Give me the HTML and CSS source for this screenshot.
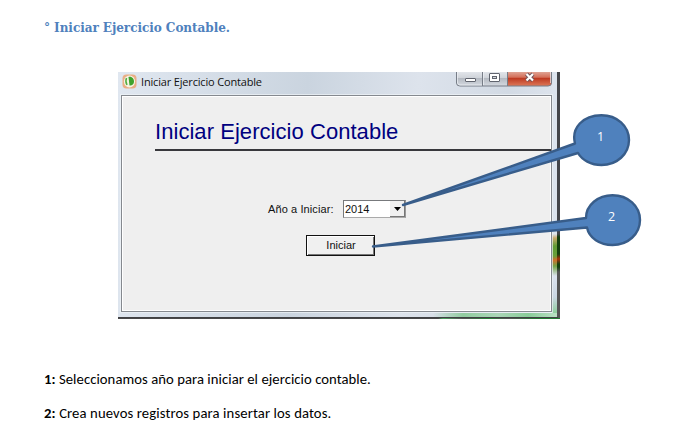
FILE: index.html
```
<!DOCTYPE html>
<html lang="es">
<head>
<meta charset="utf-8">
<title>Iniciar Ejercicio Contable</title>
<link rel="stylesheet" href="styles.css">
</head>
<body>
<main class="page">
  <h2 class="section"><span>° Iniciar Ejercicio Contable.</span></h2>
  <section class="window">
    <header class="titlebar">
      <svg class="appicon" width="15" height="15" viewBox="0 0 15 15">
        <rect x=".5" y=".5" width="14" height="14" rx="4" fill="#e9ae86"/>
        <ellipse cx="7.500" cy="7.500" rx="5.600" ry="6" fill="#f7f3e4"/>
        <path d="M6.500 3C10 2 12 5 12 7.500C12 10.500 9.500 12 7.500 11.500Z" fill="#3fa32d"/>
        <path d="M4.500 4Q3 7.500 5 11" stroke="#55ad43" stroke-width="1.500" fill="none"/>
      </svg>
      <span class="caption">Iniciar Ejercicio Contable</span>
      <svg class="controls" width="96" height="15" viewBox="0 0 96 15">
        <defs>
          <linearGradient id="glass" x2="0" y2="1"><stop offset="0" stop-color="#e2e5ea"/><stop offset=".4" stop-color="#d0d4da"/><stop offset=".45" stop-color="#b4b9c1"/><stop offset="1" stop-color="#d5dae1"/></linearGradient>
          <linearGradient id="red" x2="0" y2="1"><stop offset="0" stop-color="#dfa394"/><stop offset=".38" stop-color="#d46e58"/><stop offset=".44" stop-color="#bd3820"/><stop offset="1" stop-color="#dd7959"/></linearGradient>
        </defs>
        <path d="M.5 0V11Q.5 14 4 14H92Q95.500 14 95.500 11V0Z" fill="url(#glass)"/>
        <path d="M51 0H95.500V11Q95.500 14 92 14H51Z" fill="url(#red)"/>
        <path d="M.5 0V11Q.5 14 4 14H92Q95.500 14 95.500 11V0M26.500 0V14M51.500 0V14" fill="none" stroke="#777d87"/>
        <path d="M1.500 0V11Q2 13 4 13H26M27.500 0V13M94.500 0V11" fill="none" stroke="#eef1f5" opacity=".7"/>
        <rect x="9.500" y="6.500" width="10" height="3" rx=".5" fill="#fff" stroke="#60646e"/>
        <rect x="33.500" y="1.500" width="10" height="8" rx=".5" fill="#fff" stroke="#60646e"/>
        <rect x="36.500" y="4.500" width="4" height="2" fill="#d5d8dd" stroke="#60646e"/>
        <path d="M70.500 2L77 8.500M77 2L70.500 8.500" stroke="#70545a" stroke-width="4"/>
        <path d="M70.500 2L77 8.500M77 2L70.500 8.500" stroke="#fff" stroke-width="2.200"/>
      </svg>
    </header>
    <div class="client">
      <h1 class="heading"><span>Iniciar Ejercicio Contable</span></h1>
      <div class="field">
        <span class="label">Año a Iniciar:</span>
        <span class="combo"><span class="value">2014</span><span class="drop"><svg width="9" height="5" viewBox="0 0 9 5"><path d="M1 0H8L4.500 4Z"/></svg></span></span>
      </div>
      <button class="action"><span>Iniciar</span></button>
    </div>
  </section>
  <p class="note first"><b>1:</b> Seleccionamos año para iniciar el ejercicio contable.</p>
  <p class="note second"><b>2:</b> Crea nuevos registros para insertar los datos.</p>
  <svg class="callouts" width="693" height="444" viewBox="0 0 693 444">
    <g fill="#4f81bd" stroke="#385d8a" stroke-width="2.400" stroke-linejoin="round">
      <path d="M575 143.500C571 128 583 115.200 601.500 115.200C617 115.200 629 126 629 140C629 154 617 165 601.500 165C591 165 582 160 578 153L403 205Z"/>
      <path d="M586 218C586 205 598 195.200 612.500 195.200C628 195.200 640 206 640 220C640 234 628 245 612.500 245C600 245 589 238 587 227.500L373 246.500Z"/>
    </g>
    <text x="600.500" y="141">1</text>
    <text x="611.500" y="221">2</text>
  </svg>
</main>
</body>
</html>
```
FILE: styles.css
```
* { box-sizing: border-box; }
body { margin: 0; background: #fff; }
.page { position: relative; width: 693px; height: 444px; overflow: hidden; }
.section {
  height: 72px; margin: 0; padding: 18px 0 0 44px;
  font: bold 13.4px/19px "DejaVu Serif Condensed", "DejaVu Serif", serif;
  font-stretch: condensed; letter-spacing: -.06px; color: #4f81bd;
}
.window {
  width: 442px; height: 247px; margin-left: 118px; padding: 0 8px 7px 3px;
  background:
    linear-gradient(90deg, transparent 320px, #47a05b 325px, #555 345px, #238335 370px, #555 390px, #207a30 420px) 0 246px / 442px 1px no-repeat,
    linear-gradient(#3c3d40, #4b4b4d) 0 245px / 440px 2px no-repeat,
    linear-gradient(#44464b 0 162px, #143f0d 165px 182px, #a8330b 187px, #143f0d 192px 195px, #555 200px) 439px 0 / 3px 100% no-repeat,
    linear-gradient(90deg, transparent 315px, #91cda0 345px, #aad6b7 380px, #89cd99 410px, #b9dfc3 438px) 0 241px / 439px 4px no-repeat,
    linear-gradient(#dce4ee 0 162px, #c8a96d 166px, #619c35 174px, #68a03a 184px, #d0702b 188px, #73a246 194px, #dce3ef 204px, #cad7e3 225px, #92cfa1 240px) 434px 0 / 5px 100% no-repeat,
    linear-gradient(95deg, #e0e7f0, #cad4df 190px, #dde3ec 300px, #d2dae4 390px, #e2e8f1);
}
.titlebar { display: flex; height: 23px; }
.appicon { flex: none; margin: 2px 0 0 1px; }
.caption {
  flex: none; width: 321px; padding: 2px 0 0 4px; white-space: nowrap;
  font: 11px/16px "Open Sans", sans-serif; letter-spacing: -.17px; color: #111;
}
.controls { flex: none; margin-left: -2px; }
.client {
  display: flex; flex-direction: column; width: 431px; height: 217px;
  background: #efefef; border: 1px solid #85898f;
  box-shadow: inset 1px 1px #fff, inset -1px -1px #fff, 0 0 0 1px #f0f4f8aa;
}
.heading {
  height: 55px; margin: 0 0 0 33px; padding-top: 23px;
  border-bottom: 2px solid #38383c;
  font: 22px/26px "Liberation Sans", sans-serif; letter-spacing: .05px; color: #000080;
}
.field { display: flex; margin: 49px 0 0 146px; height: 19px; }
.label, .value, .action { font: 11px/17px "Liberation Sans", sans-serif; color: #111; white-space: nowrap; }
.label { width: 75px; padding-top: 1px; letter-spacing: .1px; }
.combo {
  display: flex; justify-content: space-between; width: 63px; height: 18px;
  background: #fff; border: 1px solid #77797c; border-right-color: #999; border-bottom-color: #aaa;
}
.value { padding-left: 1px; line-height: 17px; }
.drop {
  display: flex; align-items: center; justify-content: center; width: 15px; height: 16px;
  padding-top: 2px; background: #f0f0f0; border-right: 1px solid #777; border-bottom: 1px solid #777;
}
.action {
  width: 69px; height: 21px; margin: 16px 0 0 184px; padding: 0 0 0 1px;
  background: #f0f0f0; border: 1px solid #111;
  box-shadow: inset 1px 1px #fff, inset -1px -1px #777;
}
.note { margin: 0; padding-left: 44px; font: 14.67px/20px Carlito, Lato, sans-serif; letter-spacing: .06px; color: #000; white-space: nowrap; }
.first { padding-top: 50px; }
.second { padding-top: 14px; letter-spacing: .12px; }
.callouts { position: absolute; left: 0; top: 0; }
.callouts text { font: 12.5px "Open Sans", sans-serif; fill: #fff; text-anchor: middle; }
```
